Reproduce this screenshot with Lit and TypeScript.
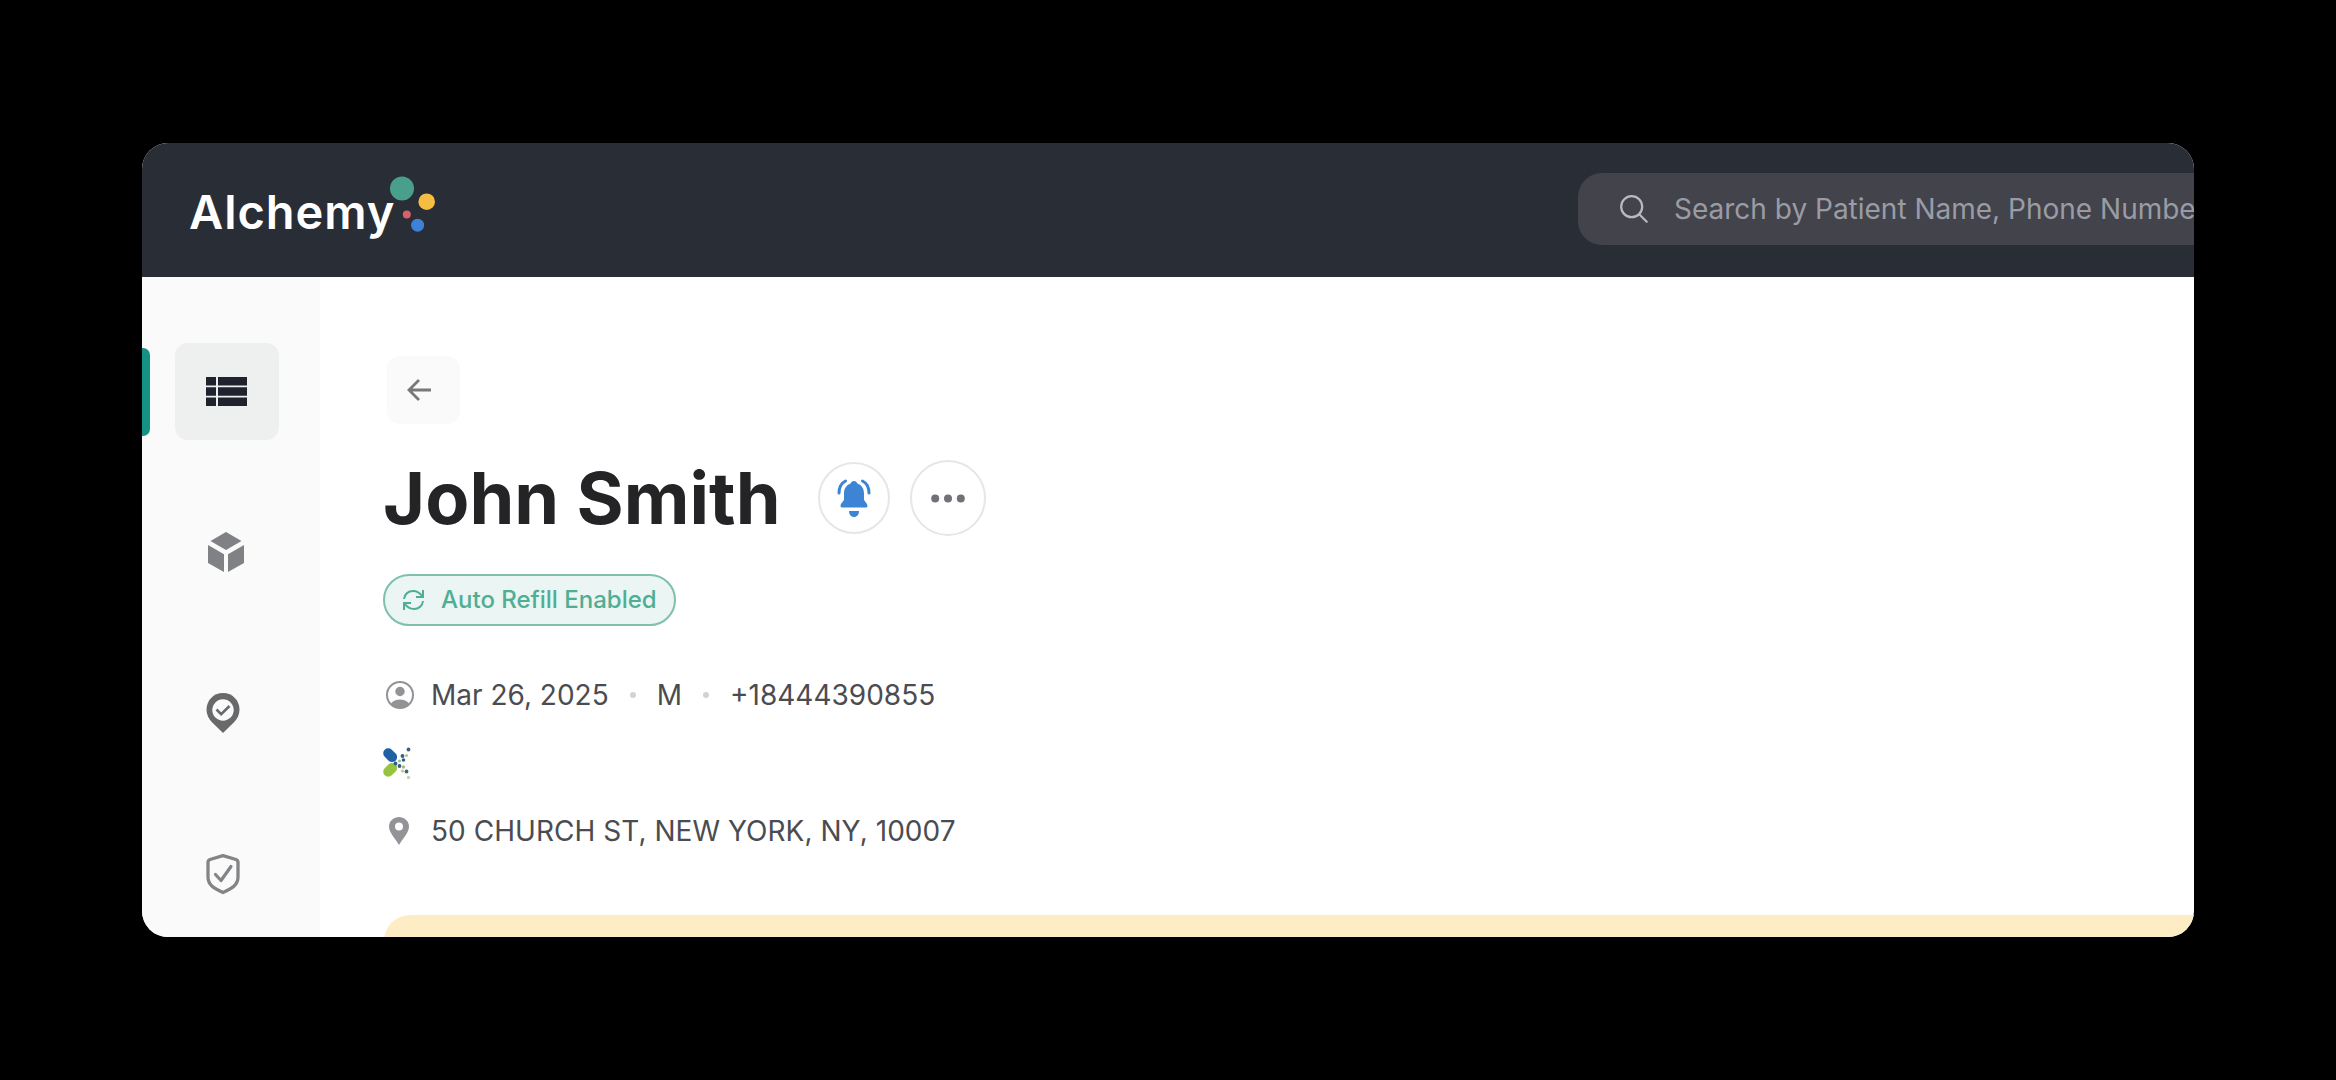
import { css, html, LitElement, svg } from 'lit';
import { customElement } from 'lit/decorators.js';

const logoDots = svg`
  <circle cx="13" cy="13.400" r="12" fill="#4a9f8c" />
  <circle cx="37.7" cy="26.7" r="8.3" fill="#f5bd42" />
  <circle cx="17.8" cy="39.4" r="4" fill="#d95f69" />
  <circle cx="28.6" cy="50.2" r="6.5" fill="#3d82d6" />
`;

const pillDots: [number, number, number, string][] = [
  [24.5, 2.5, 1.9, '#3a6582'],
  [18.5, 9, 1.9, '#2f6187'],
  [22.5, 8.500, 1.6, '#b5c59a'],
  [19.5, 13, 1.8, '#2f6187'],
  [15.5, 14, 1.6, '#a9c08c'],
  [11.5, 16.5, 1.9, '#2f6187'],
  [15.5, 19, 1.9, '#2f6187'],
  [19.5, 20, 1.7, '#a9b884'],
  [18.5, 24, 1.6, '#b8cb9b'],
  [22.5, 24.5, 1.9, '#3d6a6e'],
  [24.5, 30.5, 1.7, '#d3cdae'],
];

@customElement('app-root')
export class AppRoot extends LitElement {
  static override styles = css`
    :host {
      display: block;
      box-sizing: border-box;
      width: 2336px;
      height: 1080px;
      padding: 143px 142px;
      overflow: hidden;
      background: #000;
      font-family: Inter, 'Liberation Sans', sans-serif;
    }
    svg {
      display: block;
      flex: none;
      overflow: visible;
    }
    .window {
      display: flex;
      flex-direction: column;
      width: 2052px;
      height: 794px;
      border-radius: 26px;
      overflow: hidden;
      background: #fff;
    }
    .header {
      display: flex;
      justify-content: space-between;
      flex: none;
      height: 134px;
      background: #292d35;
    }
    .logo {
      display: flex;
      padding: 32px 0 0 47px;
    }
    .wordmark {
      padding-top: 8px;
      width: 200px;
      font-size: 47px;
      line-height: 57px;
      font-weight: 600;
      letter-spacing: 0.95px;
      color: #fff;
    }
    .search {
      display: flex;
      align-items: center;
      box-sizing: border-box;
      gap: 26px;
      width: 616px;
      height: 72px;
      margin-top: 30px;
      padding-left: 42px;
      border-radius: 24px 0 0 24px;
      background: #43434c;
      color: #9a9ca5;
      font-size: 28px;
      white-space: nowrap;
    }
    .body {
      display: flex;
      flex: 1;
      min-height: 0;
    }
    .sidebar {
      display: flex;
      flex-direction: column;
      flex: none;
      box-sizing: border-box;
      width: 178px;
      padding-top: 66px;
      gap: 64px;
      background: #fafafa;
    }
    .nav {
      display: flex;
      align-items: center;
      height: 97px;
      gap: 25px;
    }
    .nav::before {
      content: '';
      width: 8px;
      height: 88px;
      border-radius: 0 7px 7px 0;
    }
    .nav.active::before {
      background: #149384;
    }
    .tile {
      display: grid;
      place-items: center;
      box-sizing: border-box;
      width: 104px;
      height: 97px;
      padding: 0 2px 2px 0;
      border-radius: 13px;
    }
    .active .tile {
      padding-bottom: 0;
      background: #eef0f0;
    }
    .content {
      flex: 1;
      min-width: 0;
      padding: 79px 0 0 64px;
    }
    .back {
      display: grid;
      place-items: center;
      box-sizing: border-box;
      width: 73px;
      height: 68px;
      margin-left: 3px;
      padding: 0 10px 1px 0;
      border-radius: 13px;
      background: #fafafa;
    }
    .title {
      display: flex;
      align-items: center;
      height: 76px;
      margin: 36px 0 0 -1px;
    }
    h1 {
      width: 435px;
      margin: 0;
      font-size: 72px;
      line-height: 76px;
      font-weight: 700;
      letter-spacing: 0.1px;
      color: #242426;
      white-space: nowrap;
    }
    .round {
      display: grid;
      place-items: center;
      box-sizing: border-box;
      width: 72px;
      height: 72px;
      border: 2px solid #e6e6e8;
      border-radius: 50%;
    }
    .round.more {
      width: 76px;
      height: 76px;
      margin-left: 20px;
    }
    .badge {
      display: flex;
      align-items: center;
      box-sizing: border-box;
      width: 293px;
      height: 52px;
      margin: 38px 0 0 -1px;
      padding: 0 0 1px 18px;
      gap: 17px;
      border: 2px solid #7fbfae;
      border-radius: 26px;
      background: #ebf5f3;
      color: #4fae93;
      font-size: 24px;
      font-weight: 500;
      white-space: nowrap;
    }
    .row {
      display: flex;
      align-items: center;
      height: 34px;
      font-size: 28px;
      color: #4b4c52;
      white-space: nowrap;
    }
    .row.details {
      margin-top: 52px;
      padding-left: 2px;
    }
    .details svg {
      margin-right: 17px;
    }
    .sep {
      width: 6px;
      height: 6px;
      margin: 0 21px;
      border-radius: 50%;
      background: #d2d2d5;
    }
    .pill {
      margin-top: 35px;
    }
    .row.address {
      margin-top: 35px;
      padding-left: 6px;
      gap: 23px;
      letter-spacing: 0.04px;
    }
    .banner {
      height: 60px;
      margin-top: 67px;
      border-radius: 26px 0 0 0;
      background: #feecc4;
    }
  `;

  private renderHeader() {
    return html`
      <header class="header">
        <div class="logo">
          <span class="wordmark">Alchemy</span>
          <svg width="48" height="58">${logoDots}</svg>
        </div>
        <div class="search">
          <svg width="28" height="28" fill="none" stroke="#b9bac1" stroke-width="2.2" stroke-linecap="round">
            <circle cx="11.700" cy="11.700" r="10.500" />
            <path d="M19.2 19.2L26.700 26.700" />
          </svg>
          <span>Search by Patient Name, Phone Numbe</span>
        </div>
      </header>
    `;
  }

  private renderSidebar() {
    return html`
      <nav class="sidebar">
        <div class="nav active">
          <div class="tile">
            <svg width="41" height="29" fill="#20222e">
              <path d="M0 0H10V8.5H0zM12 0H41V8.5H12zM0 10.2H10V18.7H0zM12 10.2H41V18.7H12zM0 20.4H10V29H0zM12 20.4H41V29H12z" />
            </svg>
          </div>
        </div>
        <div class="nav">
          <div class="tile">
            <svg width="36" height="40" fill="#808184">
              <path d="M18 0L33.5 9L18 18L2.5 9zM0 13L16 22.3V40L0 31zM36 13L20 22.3V40L36 31z" />
            </svg>
          </div>
        </div>
        <div class="nav">
          <div class="tile">
            <svg width="40" height="40" fill="none">
              <path fill="#68696b" d="M17 0C7.500 0 .5 7.500 .5 16.500C.5 21.500 2.600 25.800 6 29.200L17 40L28 29.200C31.400 25.800 33.500 21.500 33.500 16.500C33.500 7.500 26.500 0 17 0z" />
              <circle cx="17" cy="17" r="10.7" fill="#fafafa" />
              <path d="M10.500 16.500L15.200 21.200L23.500 13" stroke="#68696b" stroke-width="2.600" />
            </svg>
          </div>
        </div>
        <div class="nav">
          <div class="tile">
            <svg width="40" height="40" fill="none" stroke="#838486" stroke-linejoin="round">
              <path stroke-width="3.300" d="M17 1.700L30 5.500Q32 6.300 32 8.500V23C32 31 26 34.500 17 38.500C8 34.500 2 31 2 23V8.500Q2 6.300 4 5.500z" />
              <path stroke-width="3.200" stroke-linecap="round" d="M9.500 20.500L15 26.500L25 12.500" />
            </svg>
          </div>
        </div>
      </nav>
    `;
  }

  private renderContent() {
    return html`
      <main class="content">
        <div class="back">
          <svg width="24" height="22" fill="none" stroke="#77787a" stroke-width="2.800">
            <path d="M24 11H2M12 1L2 11L12 21" />
          </svg>
        </div>
        <div class="title">
          <h1>John Smith</h1>
          <div class="round">
            <svg width="34" height="38" fill="#3d84d4">
              <path d="M17 2C18.800 2 20 3 20.300 4.500C25 6 27 10 27 14.500V20C27 22.500 30.500 24 30.500 27Q30.500 28.500 29 28.500H5Q3.500 28.500 3.500 27C3.500 24 7 22.500 7 20V14.500C7 10 9 6 13.700 4.500C14 3 15.200 2 17 2z" />
              <path d="M12 32H22C22 35.500 20 38 17 38S12 35.500 12 32z" />
              <path fill="none" stroke="#3d84d4" stroke-width="3" stroke-linecap="round" d="M8.500 2C4.500 4 2 8 2 14M25.500 2C29.500 4 32 8 32 14" />
            </svg>
          </div>
          <div class="round more">
            <svg width="34" height="8" fill="#717278">
              <circle cx="4.200" cy="4.500" r="4" />
              <circle cx="17" cy="4.500" r="4" />
              <circle cx="29.800" cy="4.500" r="4" />
            </svg>
          </div>
        </div>
        <div class="badge">
          <svg width="21" height="20" fill="none" stroke="#4fae93" stroke-width="2">
            <path d="M1 9C1.500 4 5.500 1 10 1C14 1 17 3 19.500 6.500M20 0V7H13M20 11C19.500 16 15.500 19 11 19C7 19 4 17 1.500 13.500M1 20V13H8" />
          </svg>
          <span>Auto Refill Enabled</span>
        </div>
        <div class="row details">
          <svg width="28" height="28">
            <defs>
              <clipPath id="face"><circle cx="14" cy="14" r="13" /></clipPath>
            </defs>
            <circle cx="14" cy="14" r="13" fill="none" stroke="#929397" stroke-width="2" />
            <circle cx="14" cy="10.500" r="4.700" fill="#929397" />
            <ellipse cx="14" cy="26.500" rx="10.500" ry="8" fill="#929397" clip-path="url(#face)" />
          </svg>
          <span>Mar 26, 2025</span>
          <i class="sep"></i>
          <span>M</span>
          <i class="sep"></i>
          <span>+18444390855</span>
        </div>
        <svg class="pill" width="27" height="32">
          <rect x="-1.500" y="3" width="15.500" height="10" rx="5" fill="#1f61a3" transform="rotate(45 6 8)" />
          <rect x="-1.500" y="18" width="15.500" height="10" rx="5" fill="#97c440" transform="rotate(-45 6 23)" />
          ${pillDots.map(([x, y, r, c]) => svg`<circle cx=${x} cy=${y} r=${r} fill=${c} />`)}
        </svg>
        <div class="row address">
          <svg width="18" height="28">
            <path
              fill="#939498"
              fill-rule="evenodd"
              d="M9 0C4 0 -1 4 -1 9.300C-1 16 5 21 9 28C13 21 19 16 19 9.300C19 4 14 0 9 0zM9 5.500A4 4 0 1 1 9 13.500A4 4 0 1 1 9 5.500z"
            />
          </svg>
          <span>50 CHURCH ST, NEW YORK, NY, 10007</span>
        </div>
        <div class="banner"></div>
      </main>
    `;
  }

  override render() {
    return html`
      <div class="window">
        ${this.renderHeader()}
        <div class="body">${this.renderSidebar()} ${this.renderContent()}</div>
      </div>
    `;
  }
}

declare global {
  interface HTMLElementTagNameMap {
    'app-root': AppRoot;
  }
}
